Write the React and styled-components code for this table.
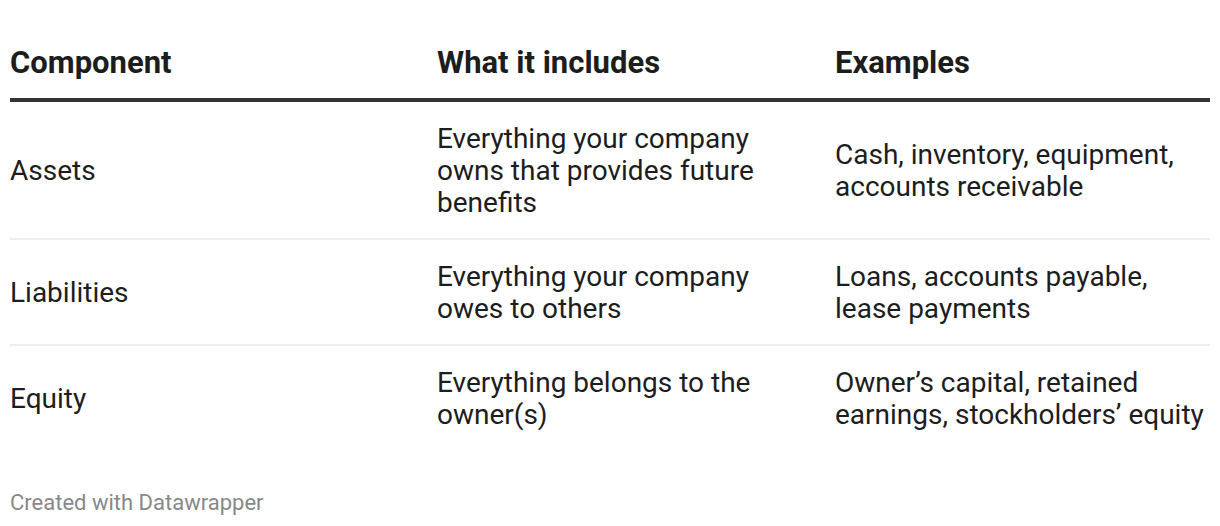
import React from "react";
import styled, { createGlobalStyle } from "styled-components";

const GlobalStyle = createGlobalStyle`
  body {
    margin: 0;
    background: #fff;
    font-family: Roboto, "Liberation Sans", sans-serif;
    color: #1d1d1d;
  }
`;

const Wrapper = styled.div`
  padding: 45px 10px 0 10px;
`;

const Table = styled.div`
  display: grid;
  grid-template-columns: 427px 398px 1fr;
`;

const HeadCell = styled.div`
  font-size: 31px;
  font-weight: 700;
  line-height: 36px;
  padding: 0 0 17px 0;
  border-bottom: 4px solid #333;
  color: #1d1d1d;
`;

const Cell = styled.div`
  display: flex;
  align-items: center;
  font-size: 28px;
  line-height: 32px;
  padding: 21px 30px 19px 0;
  border-bottom: ${(p) => (p.$last ? "none" : "2px solid #eeeeee")};
  &:nth-child(3n) {
    padding-right: 0;
  }
`;

const Footer = styled.div`
  margin-top: 40px;
  font-size: 22px;
  line-height: 26px;
  color: #888;
`;

const rows = [
  [
    "Assets",
    "Everything your company owns that provides future benefits",
    "Cash, inventory, equipment, accounts receivable",
  ],
  [
    "Liabilities",
    "Everything your company owes to others",
    "Loans, accounts payable, lease payments",
  ],
  [
    "Equity",
    "Everything belongs to the owner(s)",
    "Owner\u2019s capital, retained earnings, stockholders\u2019 equity",
  ],
];

const App = () => {
  return (
    <Wrapper>
      <GlobalStyle />
      <Table>
        <HeadCell>Component</HeadCell>
        <HeadCell>What it includes</HeadCell>
        <HeadCell>Examples</HeadCell>
        {rows.map((row, i) =>
          row.map((text, j) => (
            <Cell key={`${i}-${j}`} $last={i === rows.length - 1}>
              {text}
            </Cell>
          ))
        )}
      </Table>
      <Footer>Created with Datawrapper</Footer>
    </Wrapper>
  );
};

export default App;
